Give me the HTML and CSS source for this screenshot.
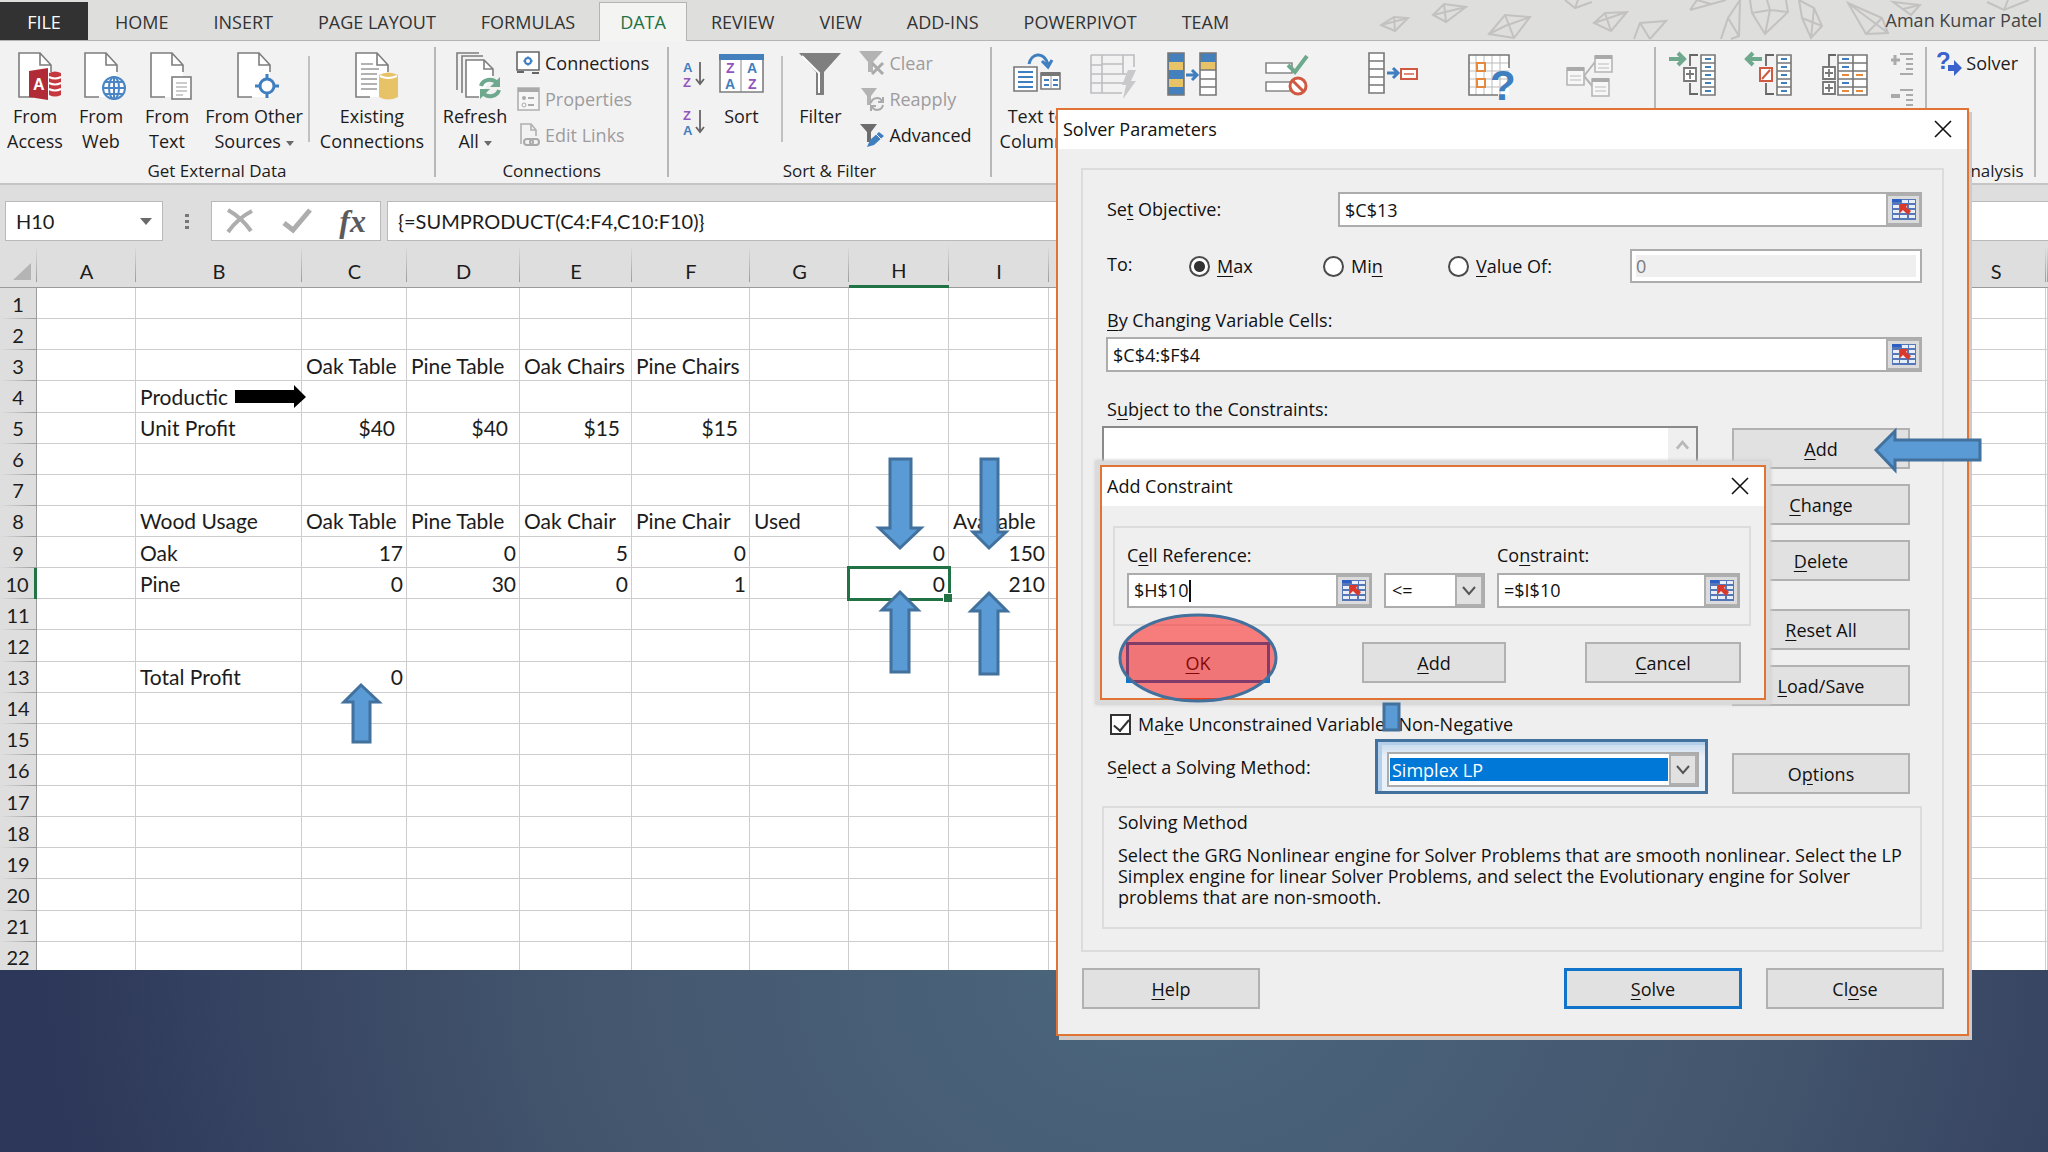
FILE: index.html
```html
<!DOCTYPE html>
<html lang="en">
<head>
    <meta charset="UTF-8">
    <meta name="viewport" content="width=device-width, initial-scale=1.0">
    <title>Solver Parameters</title>
    <link rel="stylesheet" href="styles.css">
</head>
<body>

    <!-- Shared icon parts -->
    <svg class="defs" aria-hidden="true">
        <symbol id="doc" viewBox="0 0 48 48" overflow="visible">
            <path d="M8 1H29L40 13V45H8Z" fill="#fff"/>
            <path d="M40 20V13L29 1H8V45H22M29 1V13H40" fill="none" stroke="#7d7d7d" stroke-width="1.6"/>
        </symbol>
        <symbol id="refresh" viewBox="0 0 24 24">
            <path d="M3 10A9 8 0 0 1 19 7M21 14A9 8 0 0 1 5 17" fill="none" stroke="#6fa98d" stroke-width="4"/>
            <path d="M22 1V11H12ZM2 23V13H12Z" fill="#6fa98d"/>
        </symbol>
        <symbol id="range" viewBox="0 0 24 21">
            <rect width="24" height="21" fill="#5577b8"/>
            <path d="M0 0H9V3H0Z" fill="#2c5fc4"/>
            <path d="M10 1h6v3h-6zM17 1h6v3h-6zM1 6h6v3H1zM8 6h7v3H8zM17 6h6v3h-6zM1 11h6v3H1zM8 11h7v3H8zM17 11h6v3h-6zM1 16h6v3H1zM8 16h7v3H8zM17 16h6v3h-6z" fill="#e8eef8"/>
            <path d="M8 5L16 5L14 8L19 12L16 16L11 11L8 14Z" fill="#d8392b"/>
        </symbol>
        <symbol id="funnel" viewBox="0 0 42 42">
            <path d="M0 0H42L25 19V42H17V19Z" fill="#7f7f7f"/>
            <path d="M3 3L20 20V40" fill="none" stroke="#fff" stroke-width="2"/>
        </symbol>
        <symbol id="chevron" viewBox="0 0 14 10">
            <path d="M1 1L7 8L13 1" fill="none" stroke="#555" stroke-width="2"/>
        </symbol>
        <symbol id="cross" viewBox="0 0 18 18">
            <path d="M1 1L17 17M17 1L1 17" stroke="#111" stroke-width="1.6"/>
        </symbol>
    </svg>

    <main class="excel">

        <!-- Ribbon tabs -->
        <nav class="tabs">
            <button class="tab file">FILE</button>
            <button class="tab">HOME</button>
            <button class="tab">INSERT</button>
            <button class="tab">PAGE LAYOUT</button>
            <button class="tab">FORMULAS</button>
            <button class="tab active">DATA</button>
            <button class="tab">REVIEW</button>
            <button class="tab">VIEW</button>
            <button class="tab">ADD-INS</button>
            <button class="tab">POWERPIVOT</button>
            <button class="tab">TEAM</button>
            <svg class="pattern" width="672" height="40" viewBox="0 0 672 40" aria-hidden="true">
                <g fill="none" stroke="#c3c2c1" stroke-width="2">
                    <path d="M5 25L18 17L32 18L19 31ZM18 17L19 31M5 25L32 18"/>
                    <path d="M57 15L68 4L90 7L70 22ZM68 4L70 22M57 15L90 7"/>
                    <path d="M113 34L129 15L154 17L138 38ZM129 15L138 38M113 34L129 26L154 17"/>
                    <path d="M189 0L199 8L216 2M199 8L202 0"/>
                    <path d="M218 23L229 13L251 12L235 31ZM229 13L235 31M218 23L251 12"/>
                    <path d="M258 39L264 23L290 21L274 39M264 23L274 39"/>
                    <path d="M314 10L321 0M314 10L350 0M321 0L335 4"/>
                    <path d="M345 39L352 18L364 0L363 36L355 39M352 18L363 36M352 18L364 0"/>
                    <path d="M374 0L376 13L389 34L412 12L410 0M376 13L394 10L412 12M389 34L394 10L391 0"/>
                    <path d="M423 0L426 18L435 38L446 26L438 8ZM438 8L435 38M426 18L446 26"/>
                    <path d="M472 3L506 18L512 33L490 34ZM506 18L490 34M472 3L512 33"/>
                    <path d="M517 2L544 5L535 15ZM527 9L544 5"/>
                    <path d="M611 2L628 10L653 0M628 10L632 0"/>
                </g>
            </svg>
            <span class="user">Aman Kumar Patel</span>
        </nav>

        <!-- Ribbon -->
        <section class="ribbon">
            <div class="group">
                <div class="tools external">
                    <button class="big">
                        <svg width="48" height="48" viewBox="0 0 48 48"><use href="#doc"/>
                            <path d="M18 19L37 16V48L18 45Z" fill="#b02b35"/>
                            <path d="M38 21Q44 18 50 21V43Q44 46 38 43Z" fill="#c5383f"/>
                            <path d="M38 25Q44 28 50 25M38 31Q44 34 50 31M38 37Q44 40 50 37" fill="none" stroke="#fff" stroke-width="2"/>
                            <text x="22" y="38" class="glyph white" font-size="16">A</text>
                        </svg>
                        <span>From<br>Access</span>
                    </button>
                    <button class="big">
                        <svg width="48" height="48" viewBox="0 0 48 48"><use href="#doc"/>
                            <g fill="#fff" stroke="#4a86c5" stroke-width="2"><circle cx="37" cy="36" r="11"/><ellipse cx="37" cy="36" rx="5" ry="11"/><path d="M26 36H48M28 30H46M28 42H46M37 25V47" fill="none"/></g>
                        </svg>
                        <span>From<br>Web</span>
                    </button>
                    <button class="big">
                        <svg width="48" height="48" viewBox="0 0 48 48"><use href="#doc"/>
                            <rect x="29" y="25" width="19" height="22" fill="#fff" stroke="#7d7d7d" stroke-width="1.6"/>
                            <path d="M33 31H44M33 35H44M33 39H44M33 43H40" stroke="#999"/>
                        </svg>
                        <span>From<br>Text</span>
                    </button>
                    <button class="big">
                        <svg width="48" height="48" viewBox="0 0 48 48"><use href="#doc"/>
                            <circle cx="37" cy="34" r="7" fill="#fff" stroke="#3f7fc0" stroke-width="3"/>
                            <path d="M37 22V27M37 41V46M25 34H30M44 34H49" stroke="#3f7fc0" stroke-width="3"/>
                        </svg>
                        <span>From Other<br>Sources <i class="caret-down"></i></span>
                    </button>
                    <hr class="split">
                    <button class="big">
                        <svg width="48" height="48" viewBox="0 0 48 48"><use href="#doc"/>
                            <path d="M13 12H25M13 17H31M13 22H29M13 27H29M13 32H29M13 37H29" stroke="#999" stroke-width="1.5"/>
                            <path d="M31 23Q40 18 50 23V45Q40 50 31 45Z" fill="#e8c267"/>
                            <path d="M32 24Q40 28 49 24" fill="none" stroke="#fff" stroke-width="2"/>
                        </svg>
                        <span>Existing<br>Connections</span>
                    </button>
                </div>
                <h2>Get External Data</h2>
            </div>

            <div class="group">
                <div class="tools">
                    <button class="big refresh">
                        <svg width="48" height="48" viewBox="0 0 48 48">
                            <path d="M6 38V1H28M11 41V4H32" fill="none" stroke="#7d7d7d" stroke-width="1.6"/>
                            <path d="M28 45H15V8H33L42 17V24" fill="#fff" stroke="#7d7d7d" stroke-width="1.6"/>
                            <path d="M33 8V17H42" fill="none" stroke="#7d7d7d" stroke-width="1.6"/>
                            <use href="#refresh" x="27" y="24" width="24" height="24"/>
                        </svg>
                        <span>Refresh<br>All <i class="caret-down"></i></span>
                    </button>
                    <div class="stack">
                        <button class="small">
                            <svg width="25" height="24" viewBox="0 0 25 24"><path d="M1 1H23V19H1Z" fill="#fff" stroke="#666" stroke-width="1.6"/><path d="M1 21H8M16 22H23" stroke="#666" stroke-width="2"/><circle cx="12" cy="10" r="3" fill="none" stroke="#3f7fc0" stroke-width="2"/><path d="M12 5V15M7 10H17" stroke="#3f7fc0" stroke-dasharray="2 6"/></svg>
                            Connections
                        </button>
                        <button class="small" disabled>
                            <svg width="25" height="24" viewBox="0 0 25 24"><path d="M2 1H23V23H2Z" fill="#f6f6f6" stroke="#b0b0b0" stroke-width="1.6"/><path d="M2 3H23" stroke="#aaa" stroke-width="4"/><circle cx="8" cy="11" r="2" fill="#aaa"/><circle cx="8" cy="18" r="2" fill="none" stroke="#aaa"/><path d="M12 11H18M12 18H18" stroke="#aaa" stroke-width="2"/></svg>
                            Properties
                        </button>
                        <button class="small" disabled>
                            <svg width="25" height="24" viewBox="0 0 25 24"><path d="M5 21V1H15L20 7V13M15 1V7H20" fill="none" stroke="#b0b0b0" stroke-width="1.6"/><rect x="8" y="16" width="9" height="6" rx="3" fill="none" stroke="#aaa" stroke-width="2"/><rect x="14" y="16" width="9" height="6" rx="3" fill="none" stroke="#aaa" stroke-width="2"/></svg>
                            Edit Links
                        </button>
                    </div>
                </div>
                <h2>Connections</h2>
            </div>

            <div class="group">
                <div class="tools sortfilter">
                    <div class="az">
                        <button class="plain" aria-label="Sort A to Z">
                            <svg width="22" height="26" viewBox="0 0 22 26"><text x="0" y="11" class="glyph blue" font-size="13">A</text><text x="0" y="26" class="glyph purple" font-size="13">Z</text><path d="M17 1V22M13 18L17 23L21 18" fill="none" stroke="#666" stroke-width="1.8"/></svg>
                        </button>
                        <button class="plain" aria-label="Sort Z to A">
                            <svg width="22" height="26" viewBox="0 0 22 26"><text x="0" y="11" class="glyph purple" font-size="13">Z</text><text x="0" y="26" class="glyph blue" font-size="13">A</text><path d="M17 1V22M13 18L17 23L21 18" fill="none" stroke="#666" stroke-width="1.8"/></svg>
                        </button>
                    </div>
                    <button class="big sort">
                        <svg width="48" height="48" viewBox="0 0 48 48">
                            <path d="M3 3H46V40H3Z" fill="#fff" stroke="#7d7d7d" stroke-width="1.6"/>
                            <path d="M2 2H47V8H2Z" fill="#4480bc"/><path d="M24 8V40" stroke="#888"/>
                            <text x="9" y="21" class="glyph purple" font-size="14">Z</text><text x="30" y="21" class="glyph blue" font-size="14">A</text>
                            <text x="8" y="37" class="glyph blue" font-size="14">A</text><text x="31" y="37" class="glyph purple" font-size="14">Z</text>
                        </svg>
                        <span>Sort</span>
                    </button>
                    <hr class="split">
                    <button class="big filter">
                        <svg width="48" height="48" viewBox="0 0 48 48"><use href="#funnel" x="3" y="1" width="42" height="42"/></svg>
                        <span>Filter</span>
                    </button>
                    <div class="stack">
                        <button class="small" disabled>
                            <svg width="26" height="24" viewBox="0 0 26 24"><path d="M0 0H24L14 11V21H9V11Z" fill="#b3b3b3"/><path d="M13 12L24 23M24 12L13 23" stroke="#aaa" stroke-width="3"/></svg>
                            Clear
                        </button>
                        <button class="small" disabled>
                            <svg width="26" height="24" viewBox="0 0 26 24"><path d="M2 1H18L12 9V18H8V9Z" fill="#b3b3b3"/><path d="M12 16A6 6 0 0 1 23 14M24 18A6 6 0 0 1 13 20M24 10V15H19M12 24V19H17" fill="none" stroke="#aaa" stroke-width="2"/></svg>
                            Reapply
                        </button>
                        <button class="small">
                            <svg width="26" height="24" viewBox="0 0 26 24"><path d="M1 1H18L12 9V19H8V9Z" fill="#6d6d6d"/><path d="M8 24L11 17L20 9L25 13L15 22Z" fill="#3f7fc0"/><path d="M17 11L22 16" stroke="#fff"/></svg>
                            Advanced
                        </button>
                    </div>
                </div>
                <h2>Sort &amp; Filter</h2>
            </div>

            <div class="group wide">
                <div class="tools datatools">
                    <button class="big">
                        <svg width="48" height="48" viewBox="0 0 48 48">
                            <path d="M1 15H24V39H1Z" fill="#fff" stroke="#777" stroke-width="1.6"/><path d="M5 20H20M5 25H20M5 30H20M5 35H20" stroke="#3f7fc0" stroke-width="2"/>
                            <path d="M28 21H47V37H28Z" fill="#fff" stroke="#777" stroke-width="1.6"/><path d="M28 22H47" stroke="#777" stroke-width="4"/><path d="M31 28H36M40 28H45M31 33H36M40 33H45" stroke="#3f7fc0" stroke-width="2"/><path d="M38 24V37" stroke="#999"/>
                            <path d="M16 12C18 2 30 -2 35 12M29 9L35 15L39 8" fill="none" stroke="#3f7fc0" stroke-width="3"/>
                        </svg>
                        <span>Text to<br>Columns</span>
                    </button>
                    <button class="big" aria-label="Flash Fill">
                        <svg width="48" height="48" viewBox="0 0 48 48">
                            <path d="M1 3H44V15M1 3V41H32M1 13H12M1 22H40M1 31H34M12 3V41M33 3V13M12 12H33V22H12Z" fill="none" stroke="#bdbdc0" stroke-width="1.6"/>
                            <path d="M38 18H46L41 29H46L33 47L36 33H32Z" fill="#c9c9cc"/>
                        </svg>
                    </button>
                    <button class="big" aria-label="Remove Duplicates">
                        <svg width="50" height="48" viewBox="0 0 50 48">
                            <path d="M1 1H17V43H1Z" fill="#4480bc"/><path d="M2 10H16V18H2ZM2 27H16V35H2Z" fill="#e8c267"/>
                            <path d="M1 1H17V43H1Z" fill="none" stroke="#777" stroke-width="1.6"/>
                            <path d="M33 1H49V43H33Z" fill="#fff"/><path d="M33 1H49V10H33Z" fill="#4480bc"/><path d="M33 10H49V18H33Z" fill="#e8c267"/>
                            <path d="M33 1H49V43H33ZM33 18H49M33 27H49M33 35H49" fill="none" stroke="#777" stroke-width="1.6"/>
                            <path d="M19 23H28M25 18L30 23L25 28" fill="none" stroke="#3f7fc0" stroke-width="3"/>
                        </svg>
                    </button>
                    <button class="big" aria-label="Data Validation">
                        <svg width="48" height="48" viewBox="0 0 48 48">
                            <path d="M2 11H28V21H2ZM2 30H28V39H2Z" fill="#fff" stroke="#888" stroke-width="1.6"/>
                            <path d="M24 13L31 20L43 4" fill="none" stroke="#6fa98d" stroke-width="4"/>
                            <circle cx="34" cy="34" r="8" fill="#fff" stroke="#cf5a41" stroke-width="3"/><path d="M28 28L40 40" stroke="#cf5a41" stroke-width="3"/>
                        </svg>
                    </button>
                    <button class="big" aria-label="Consolidate">
                        <svg width="50" height="48" viewBox="0 0 50 48">
                            <path d="M1 1H16V41H1ZM1 9H16M1 17H16M1 25H16M1 33H16" fill="#fff" stroke="#777" stroke-width="1.6"/>
                            <path d="M19 21H28M25 16L30 21L25 26" fill="none" stroke="#3f7fc0" stroke-width="3"/>
                            <path d="M33 17H49V27H33Z" fill="#fff" stroke="#cf5a41" stroke-width="2"/><path d="M36 22H46" stroke="#e08a78" stroke-width="2"/>
                        </svg>
                    </button>
                    <button class="big" aria-label="What-If Analysis">
                        <svg width="48" height="48" viewBox="0 0 48 48">
                            <path d="M1 3H41V43H1Z" fill="#fff"/><path d="M8 3V43M16 3V43M24 3V43M32 3V43M1 11H41M1 19H41M1 27H41M1 35H41" stroke="#bbb"/>
                            <path d="M41 16V3H1V43H30" fill="none" stroke="#777" stroke-width="1.6"/>
                            <path d="M9 11H17V19H9ZM9 27H17V35H9Z" fill="#fff" stroke="#e58a3c" stroke-width="2"/>
                            <text x="22" y="48" class="glyph blue" font-size="42">?</text>
                        </svg>
                    </button>
                    <button class="big" aria-label="Relationships">
                        <svg width="48" height="48" viewBox="0 0 48 48">
                            <path d="M18 24L29 10M18 24L27 35" stroke="#b5b5b5" stroke-width="2"/>
                            <g fill="#f7f7f7" stroke="#b5b5b5" stroke-width="1.6"><path d="M1 16H18V33H1Z"/><path d="M29 4H46V20H29Z"/><path d="M26 27H43V44H26Z"/></g>
                            <path d="M1 17H18M29 5H46M26 28H43" stroke="#aaa" stroke-width="4"/>
                            <path d="M4 24H15M4 28H15M32 12H43M32 16H43M29 35H40M29 39H40" stroke="#bbb"/>
                        </svg>
                    </button>
                </div>
            </div>

            <div class="group">
                <div class="tools outline">
                    <button class="big" aria-label="Group">
                        <svg width="48" height="48" viewBox="0 0 48 48">
                            <path d="M0 7H14M9 1L15 7L9 13" fill="none" stroke="#6fa98d" stroke-width="4"/>
                            <path d="M29 3H21V14M21 31V42H29" fill="none" stroke="#666" stroke-width="1.8"/><path d="M15 16H27V29H15Z" fill="#fff" stroke="#777" stroke-width="1.8"/><path d="M17 22H25M21 18V27" stroke="#777" stroke-width="1.8"/>
                            <path d="M32 3H46V43H32ZM32 11H46M32 19H46M32 27H46M32 35H46" fill="#fff" stroke="#777" stroke-width="1.6"/><path d="M36 7H42M36 15H42M36 23H42M36 31H42M36 39H42" stroke="#3f7fc0" stroke-width="2"/>
                        </svg>
                    </button>
                    <button class="big" aria-label="Ungroup">
                        <svg width="48" height="48" viewBox="0 0 48 48">
                            <path d="M17 7H3M8 1L2 7L8 13" fill="none" stroke="#6fa98d" stroke-width="4"/>
                            <path d="M29 3H21V14M21 31V42H29" fill="none" stroke="#666" stroke-width="1.8"/><path d="M15 16H27V29H15Z" fill="#fff" stroke="#cf5a41" stroke-width="2"/><path d="M17 27L25 18" stroke="#cf5a41" stroke-width="2"/>
                            <path d="M32 3H46V43H32ZM32 11H46M32 19H46M32 27H46M32 35H46" fill="#fff" stroke="#777" stroke-width="1.6"/><path d="M36 7H42M36 15H42M36 23H42M36 31H42M36 39H42" stroke="#3f7fc0" stroke-width="2"/>
                        </svg>
                    </button>
                    <button class="big" aria-label="Subtotal">
                        <svg width="48" height="48" viewBox="0 0 48 48">
                            <path d="M15 3H8V14" fill="none" stroke="#666" stroke-width="1.8"/><path d="M2 15H14V27H2ZM2 30H14V42H2Z" fill="#fff" stroke="#777" stroke-width="1.8"/><path d="M4 21H12M8 17V25M4 36H12M8 32V40" stroke="#777" stroke-width="1.8"/>
                            <path d="M17 3H46V43H17ZM17 11H46M17 19H46M17 27H46M17 35H46M32 3V43" fill="#fff" stroke="#777" stroke-width="1.6"/><path d="M21 7H28M21 15H28M21 31H28" stroke="#3f7fc0" stroke-width="2"/><path d="M21 23H28M35 23H42M21 39H28M35 39H42" stroke="#e58a3c" stroke-width="2"/>
                        </svg>
                    </button>
                    <div class="detail">
                        <button class="plain" aria-label="Show Detail">
                            <svg width="22" height="24" viewBox="0 0 22 24"><path d="M0 8H9M4 3V13" stroke="#aaa" stroke-width="3"/><path d="M9 2H22M15 7H22M15 12H22M15 17H22M9 22H22" stroke="#aaa" stroke-width="2"/></svg>
                        </button>
                        <button class="plain" aria-label="Hide Detail">
                            <svg width="22" height="24" viewBox="0 0 22 24"><path d="M0 8H9" stroke="#aaa" stroke-width="4"/><path d="M9 2H22M15 7H22M15 12H22M15 17H22M9 22H22" stroke="#aaa" stroke-width="2"/></svg>
                        </button>
                    </div>
                </div>
            </div>

            <div class="group analysis">
                <div class="tools">
                    <div class="stack">
                        <button class="small">
                            <svg width="26" height="28" viewBox="0 0 26 28"><text x="0" y="20" class="glyph royal" font-size="24">?</text><path d="M12 16H18V11L26 19L18 27V22H12Z" fill="#3b62cc"/></svg>
                            Solver
                        </button>
                    </div>
                </div>
                <h2>Analysis</h2>
            </div>
        </section>

        <!-- Formula bar -->
        <section class="formula-bar">
            <div class="name-box">
                <input type="text" value="H10" aria-label="Name Box">
                <i class="caret-down"></i>
            </div>
            <svg class="dots" width="4" height="16" viewBox="0 0 4 16"><path d="M0 0h4v3H0zM0 6h4v3H0zM0 12h4v3H0z" fill="#777"/></svg>
            <div class="fx-box">
                <button class="plain" aria-label="Cancel entry"><svg width="28" height="26" viewBox="0 0 28 26"><path d="M2 2Q16 10 25 23M26 3Q12 10 2 24" fill="none" stroke="#adadad" stroke-width="4"/></svg></button>
                <button class="plain" aria-label="Enter"><svg width="30" height="26" viewBox="0 0 30 26"><path d="M2 15L11 22L28 2" fill="none" stroke="#adadad" stroke-width="5"/></svg></button>
                <button class="plain fx" aria-label="Insert Function">fx</button>
            </div>
            <input class="formula" type="text" value="{=SUMPRODUCT(C4:F4,C10:F10)}" aria-label="Formula">
        </section>

        <!-- Worksheet, filled in by script.js -->
        <section class="sheet">
            <table id="sheet"></table>
        </section>
    </main>

    <!-- Solver Parameters -->
    <section class="window solver">
        <header>
            <h1>Solver Parameters</h1>
            <button class="plain" aria-label="Close window"><svg width="18" height="18"><use href="#cross"/></svg></button>
        </header>

        <div class="frame params">
            <div class="objective">
                <label for="objective">Se<u>t</u> Objective:</label>
                <div class="field">
                    <input id="objective" type="text" value="$C$13">
                    <button aria-label="Select objective cell"><svg width="24" height="21"><use href="#range"/></svg></button>
                </div>
            </div>
            <div class="goal">
                <span class="to">To:</span>
                <label><input type="radio" name="goal" checked><span><u>M</u>ax</span></label>
                <label><input type="radio" name="goal"><span>Mi<u>n</u></span></label>
                <label><input type="radio" name="goal"><span><u>V</u>alue Of:</span></label>
                <div class="value-of"><input type="text" value="0" aria-label="Value" disabled></div>
            </div>

            <label class="above" for="cells"><u>B</u>y Changing Variable Cells:</label>
            <div class="field cells">
                <input id="cells" type="text" value="$C$4:$F$4">
                <button aria-label="Select variable cells"><svg width="24" height="21"><use href="#range"/></svg></button>
            </div>

            <span class="above">S<u>u</u>bject to the Constraints:</span>
            <div class="constraints">
                <div class="left">
                    <div class="list"><span class="scroll"><svg width="13" height="10" viewBox="0 0 14 10"><path d="M1 9L7 2L13 9" fill="none" stroke="#b8b8b8" stroke-width="3"/></svg></span></div>
                    <label class="check"><input type="checkbox" checked><span>Ma<u>k</u>e Unconstrained Variables Non-Negative</span></label>
                    <div class="method">
                        <label for="method">S<u>e</u>lect a Solving Method:</label>
                        <div class="highlight">
                            <div class="combo">
                                <select id="method"><option>Simplex LP</option></select>
                                <span class="arrow"><svg width="14" height="10"><use href="#chevron"/></svg></span>
                            </div>
                        </div>
                    </div>
                </div>
                <div class="side">
                    <button class="btn"><u>A</u>dd</button>
                    <button class="btn"><u>C</u>hange</button>
                    <button class="btn"><u>D</u>elete</button>
                    <button class="btn reset"><u>R</u>eset All</button>
                    <button class="btn"><u>L</u>oad/Save</button>
                    <button class="btn options">O<u>p</u>tions</button>
                </div>
            </div>

            <div class="frame about">
                <h2>Solving Method</h2>
                <p>Select the GRG Nonlinear engine for Solver Problems that are smooth nonlinear. Select the LP Simplex engine for linear Solver Problems, and select the Evolutionary engine for Solver problems that are non-smooth.</p>
            </div>
        </div>

        <footer>
            <button class="btn"><u>H</u>elp</button>
            <button class="btn default"><u>S</u>olve</button>
            <button class="btn">Cl<u>o</u>se</button>
        </footer>
    </section>

    <!-- Add Constraint -->
    <section class="window add">
        <header>
            <h1>Add Constraint</h1>
            <button class="plain" aria-label="Close window"><svg width="18" height="18"><use href="#cross"/></svg></button>
        </header>
        <div class="frame rule">
            <label for="cellref">C<u>e</u>ll Reference:</label>
            <label class="third" for="limit">Co<u>n</u>straint:</label>
            <div class="field">
                <input id="cellref" type="text" value="$H$10">
                <i class="cursor"></i>
                <button aria-label="Select cell reference"><svg width="24" height="21"><use href="#range"/></svg></button>
            </div>
            <div class="combo">
                <select aria-label="Operator"><option>&lt;=</option></select>
                <span class="arrow"><svg width="14" height="10"><use href="#chevron"/></svg></span>
            </div>
            <div class="field">
                <input id="limit" type="text" value="=$I$10">
                <button aria-label="Select constraint"><svg width="24" height="21"><use href="#range"/></svg></button>
            </div>
        </div>
        <footer>
            <button class="btn default"><u>O</u>K</button>
            <button class="btn"><u>A</u>dd</button>
            <button class="btn"><u>C</u>ancel</button>
        </footer>
    </section>

    <!-- Arrows and the ring drawn over everything -->
    <svg class="marks" aria-hidden="true">
        <path d="M235 390H294V385L306 397L294 408V403H235Z" fill="#000"/>
        <g fill="#5b9bd5" stroke="#41719c" stroke-width="3">
            <path d="M890 459H911V528H921L900 548L879 528H890Z"/>
            <path d="M981 459H998V532H1006L989 548L973 532H981Z"/>
            <path d="M900 592L918 610H909V672H891V610H882Z"/>
            <path d="M989 593L1007 611H998V674H980V611H971Z"/>
            <path d="M361 685L379 702H370V742H353V702H344Z"/>
            <path d="M1876 450L1895 431V440H1980V460H1895V470Z"/>
            <path d="M1384 704H1399V730H1384Z"/>
        </g>
        <ellipse cx="1198" cy="658" rx="78" ry="43" fill="#ff0000" fill-opacity="0.48" stroke="#41719c" stroke-width="3"/>
    </svg>

    <script src="script.js"></script>
</body>
</html>
```

FILE: styles.css
```css
* {
    box-sizing: border-box;
}

body {
    margin: 0;
    min-height: 100vh;
    overflow: hidden;
    position: relative;
    font-family: "Open Sans", "Noto Sans", sans-serif;
    font-size: 18px;
    color: #1c1c1c;
    background: radial-gradient(ellipse 58% 80% at 57% 84%, #4b677e 0%, #44566e 50%, #2d3759 95%);
}

button,
input,
select {
    font: inherit;
    color: inherit;
    margin: 0;
    border: 0;
    padding: 0;
    background: none;
    border-radius: 0;
    outline: 0;
}

h1,
h2,
p {
    margin: 0;
    font-size: inherit;
    font-weight: normal;
}

svg {
    display: block;
    flex: none;
    overflow: visible;
}

.defs {
    position: absolute;
    width: 0;
    height: 0;
}

.glyph {
    font-family: "Liberation Sans", sans-serif;
    font-weight: 700;
}

.white { fill: #fff; }
.blue { fill: #3f7fc0; }
.purple { fill: #9256bd; }
.royal { fill: #3b62cc; }

.caret-down {
    display: inline-block;
    vertical-align: middle;
    border: 4px solid transparent;
    border-top: 5px solid #6a6a6a;
    border-bottom: 0;
}

/* Tabs */
.tabs {
    display: flex;
    gap: 3px;
    height: 41px;
    padding-top: 2px;
    background: #dededd;
    border-bottom: 1px solid #b5b4b5;
    position: relative;
}

.tab {
    padding: 0 20px;
    border: 1px solid transparent;
    border-bottom: 0;
    white-space: nowrap;
    color: #333;
}

.tab.file {
    width: 88px;
    margin-right: 3px;
    background: #333233;
    color: #fff;
}

.tab.active {
    margin-bottom: -1px;
    border-color: #b5b4b5;
    background: #f4f4f3;
    color: #217346;
}

.pattern {
    position: absolute;
    top: 0;
    right: 0;
    overflow: hidden;
}

.user {
    margin-left: auto;
    padding-right: 6px;
    line-height: 36px;
    position: relative;
    color: #444;
}

/* Ribbon */
.ribbon {
    display: flex;
    height: 144px;
    padding-top: 6px;
    background: #f3f2f3;
    border-bottom: 2px solid #c6c5c6;
}

.group {
    display: flex;
    flex-direction: column;
    height: 130px;
    border-right: 2px solid #b9b8b9;
}

.group.wide {
    flex: 1;
}

.group h2 {
    text-align: center;
    font-size: 17px;
    line-height: 24px;
    margin-top: auto;
    margin-bottom: -6px;
}

.tools {
    display: flex;
    padding-top: 5px;
}

.external {
    display: grid;
    grid-template-columns: 66px 66px 66px 108px 2px 124px;
    padding-left: 2px;
}

.big {
    display: flex;
    flex-direction: column;
    align-items: center;
    gap: 4px;
    line-height: 25px;
    white-space: nowrap;
}

.refresh { width: 78px; }
.sort { width: 68px; }
.filter { width: 74px; }

.split {
    width: 2px;
    height: 86px;
    margin: 4px 0;
    border: 0;
    background: #c2c1c2;
}

.sortfilter .split {
    margin-left: 6px;
}

.stack {
    display: flex;
    flex-direction: column;
    margin-top: -7px;
    padding: 0 18px 0 2px;
}

.small {
    display: flex;
    align-items: center;
    gap: 4px;
    height: 36px;
    white-space: nowrap;
}

.small:disabled {
    color: #9d9c9d;
}

.az {
    display: flex;
    flex-direction: column;
    gap: 22px;
    padding: 9px 2px 0 14px;
}

.datatools {
    display: grid;
    grid-template-columns: 76px 78px 78px 114px 96px 102px 94px;
    padding-left: 7px;
}

.outline {
    gap: 28px;
    padding-left: 13px;
}

.detail {
    display: flex;
    flex-direction: column;
    gap: 12px;
    margin-left: -6px;
    padding-right: 12px;
}

.analysis {
    margin-right: 12px;
}

.analysis .stack {
    padding: 0 16px 0 9px;
}

.analysis h2 {
    padding-left: 22px;
}

/* Formula bar */
.formula-bar {
    display: flex;
    align-items: stretch;
    height: 56px;
    padding: 16px 0 0 5px;
    background: #dfdedf;
}

.name-box,
.fx-box,
.formula {
    background: #fff;
    border: 1px solid #bab9ba;
}

.name-box {
    display: flex;
    align-items: center;
    width: 158px;
    padding: 0 10px;
    font-family: Lato, sans-serif;
    font-size: 20px;
}

.name-box input {
    flex: 1;
    min-width: 0;
}

.name-box .caret-down {
    border-width: 7px 6px 0;
}

.dots {
    margin: 13px 22px;
}

.fx-box {
    display: flex;
    align-items: center;
    justify-content: space-between;
    width: 170px;
    padding: 0 14px;
}

.fx {
    font: italic bold 32px/32px "Liberation Serif", serif;
    color: #5b5b5b;
}

.formula {
    flex: 1;
    margin-left: 6px;
    padding: 0 10px;
    border-right: 0;
    font-family: Lato, sans-serif;
    font-size: 20px;
}

/* Worksheet */
.sheet {
    height: 729px;
    overflow: hidden;
    background: #fff;
}

.sheet table {
    width: 100%;
    height: 732px;
    table-layout: fixed;
    border-spacing: 0;
    font-family: Lato, sans-serif;
    font-size: 21px;
    line-height: 24px;
}

.sheet thead tr {
    height: 47px;
}

.sheet td {
    padding: 1px 4px 0;
    white-space: nowrap;
    border-right: 1px solid #cfcccf;
    border-bottom: 1px solid #cfcccf;
}

.sheet th {
    padding: 1px 0;
    font-weight: normal;
    font-size: 20px;
    background: #dfdedf;
}

.sheet thead th {
    padding-top: 15px;
    border-bottom: 1px solid #9c9b9c;
    background: linear-gradient(#dfdedf, #9c9b9c) right / 1px 36px no-repeat #dfdedf;
}

.sheet thead th.picked {
    border-bottom: 3px solid #217346;
}

.sheet tbody th {
    border-right: 1px solid #9c9b9c;
    background: linear-gradient(to right, #dfdedf, #9c9b9c) bottom / 100% 1px no-repeat #dfdedf;
}

.sheet tbody th.picked {
    border-right: 3px solid #217346;
}

.corner svg {
    margin-left: 13px;
}

.sheet .num {
    text-align: right;
    padding-right: 3px;
}

.sheet .money {
    text-align: right;
    padding-right: 11px;
}

.sheet .cell-active {
    position: relative;
    outline: 3px solid #217346;
    outline-offset: -1px;
}

.cell-active::after {
    content: "";
    position: absolute;
    right: -4px;
    bottom: -4px;
    width: 8px;
    height: 8px;
    background: #217346;
    border: 1px solid #fff;
    border-width: 1px 0 0 1px;
}

/* Windows */
.window {
    position: absolute;
    border: 2px solid #df7434;
    background: #f0eff0;
    color: #111;
}

.window header {
    display: flex;
    align-items: center;
    justify-content: space-between;
    height: 39px;
    padding: 0 15px 2px 5px;
    background: #fff;
}

.frame {
    border: 2px solid #dddcdd;
}

.window footer {
    display: flex;
}

.btn {
    height: 41px;
    border: 2px solid #b2b1b2;
    background: #e2e1e2;
}

.btn.default {
    border: 3px solid #1173c9;
}

u {
    text-underline-offset: 3px;
}

.field,
.combo {
    display: flex;
    height: 35px;
    border: 2px solid #adacad;
    background: #fff;
    position: relative;
}

.field input {
    flex: 1;
    min-width: 0;
    padding: 0 5px;
}

.field button {
    display: flex;
    align-items: center;
    justify-content: center;
    width: 34px;
    border: 2px solid #b0afb0;
    border-right-width: 1px;
    background: #dcdbdc;
}

.combo select {
    flex: 1;
    min-width: 0;
    appearance: none;
    padding: 0 6px;
}

.arrow {
    display: flex;
    align-items: center;
    justify-content: center;
    width: 28px;
    border: 2px solid #b0afb0;
    background: #e2e1e2;
}

/* Solver Parameters */
.solver {
    left: 1056px;
    top: 108px;
    width: 913px;
    padding-bottom: 25px;
    box-shadow: 3px 4px 0 #cfcac8;
}

.params {
    margin: 19px 23px 16px;
    padding: 22px 20px 21px 19px;
}

.objective {
    display: grid;
    grid-template-columns: 1fr 584px;
    align-items: center;
    padding-left: 5px;
}

.objective label {
    padding-bottom: 2px;
}

.goal {
    display: grid;
    grid-template-columns: 87px 134px 125px 1fr 292px;
    align-items: center;
    margin-top: 22px;
}

.goal label,
.check {
    display: flex;
    align-items: center;
    gap: 7px;
}

.to,
.above {
    padding-left: 5px;
}

.goal .to {
    padding-bottom: 4px;
}

input[type="radio"] {
    appearance: none;
    width: 21px;
    height: 21px;
    border: 2px solid #4a4a4a;
    border-radius: 50%;
    background: #fff;
}

input[type="radio"]:checked {
    background: radial-gradient(circle, #333 0 5px, #fff 6px);
}

.value-of {
    height: 34px;
    padding: 4px;
    border: 2px solid #adacad;
    background: #fff;
}

.value-of input {
    display: block;
    width: 100%;
    height: 22px;
    background: #f0eff0;
    color: #7b7b7b;
}

.above {
    display: block;
    line-height: 25px;
    margin: 25px 0 4px;
}

.field.cells {
    margin-left: 4px;
}

.constraints {
    display: flex;
    gap: 24px;
}

.left {
    flex: 1;
    display: flex;
    flex-direction: column;
}

.list {
    flex: 1;
    margin-right: 10px;
    border: 2px solid #8b8a8b;
    background: #fff;
}

.scroll {
    display: flex;
    justify-content: center;
    width: 28px;
    height: 100%;
    margin-left: auto;
    padding-top: 12px;
    background: #f0eff0;
}

.check {
    padding: 10px 0 0 8px;
    line-height: 25px;
}

input[type="checkbox"] {
    appearance: none;
    width: 21px;
    height: 21px;
    border: 2px solid #333;
    background: #fff;
    position: relative;
}

input[type="checkbox"]:checked::after {
    content: "";
    position: absolute;
    left: 5px;
    top: 0;
    width: 7px;
    height: 13px;
    border: solid #333;
    border-width: 0 2px 2px 0;
    transform: rotate(40deg);
}

.method {
    display: flex;
    align-items: center;
    justify-content: space-between;
    padding-left: 5px;
    margin-top: 2px;
}

.highlight {
    width: 333px;
    padding: 10px 6px 4px 9px;
    border: 3px solid #41719c;
    background: linear-gradient(#c3d8ec, #e9f0f7 30%);
    box-shadow: inset 4px 3px 0 #b4cfe9;
}

.highlight select {
    margin: 4px 1px;
    padding: 0 2px;
    background: #0078d7;
    color: #fff;
}

.side {
    display: flex;
    flex-direction: column;
    gap: 15px;
    width: 178px;
    margin-right: 12px;
    padding-top: 2px;
}

.side .reset {
    margin-top: 13px;
}

.side .options {
    margin-top: 32px;
}

.about {
    margin-top: 12px;
    padding: 2px 14px 19px;
    line-height: 25px;
}

.about p {
    margin-top: 10px;
    line-height: 21px;
}

.solver footer {
    gap: 24px;
    padding: 0 23px 0 24px;
}

.solver footer .btn {
    width: 178px;
}

.solver footer .btn:first-child {
    margin-right: auto;
}

/* Add Constraint */
.add {
    left: 1100px;
    top: 465px;
    width: 666px;
    padding-bottom: 15px;
    box-shadow: 0 0 0 4px #dbdadb, 0 0 3px 5px #cfcecf;
}

.rule {
    display: grid;
    grid-template-columns: 245px 101px 243px;
    column-gap: 12px;
    row-gap: 5px;
    margin: 20px 13px 16px 11px;
    padding: 15px 8px 16px 12px;
    line-height: 25px;
}

.rule .third {
    grid-column: 3;
}

.cursor {
    position: absolute;
    left: 60px;
    top: 5px;
    width: 2px;
    height: 22px;
    background: #111;
}

.add footer {
    padding: 0 23px 0 24px;
}

.add .btn {
    width: 144px;
}

.add .btn:nth-child(2) {
    margin-left: 92px;
}

.add .btn:last-child {
    width: 156px;
    margin-left: auto;
}

.marks {
    position: absolute;
    inset: 0;
    width: 100%;
    height: 100%;
    pointer-events: none;
}
```

FILE: script.js
```js
// Column letters with their widths; columns without a width share what is left
const columns = [
    ['A', 99], ['B', 166], ['C', 105], ['D', 113], ['E', 112], ['F', 118],
    ['G', 99], ['H', 100], ['I', 100], ['J'], ['K'], ['L'], ['M'], ['N'],
    ['O'], ['P'], ['Q'], ['R'], ['S'], ['', 2]
];

const cells = {
    C3: 'Oak Table', D3: 'Pine Table', E3: 'Oak Chairs', F3: 'Pine Chairs',
    B4: 'Productic',
    B5: 'Unit Profit', C5: '$40', D5: '$40', E5: '$15', F5: '$15',
    B8: 'Wood Usage', C8: 'Oak Table', D8: 'Pine Table', E8: 'Oak Chair',
    F8: 'Pine Chair', G8: 'Used', I8: 'Available',
    B9: 'Oak', C9: 17, D9: 0, E9: 5, F9: 0, H9: 0, I9: 150,
    B10: 'Pine', C10: 0, D10: 30, E10: 0, F10: 1, H10: 0, I10: 210,
    B13: 'Total Profit', C13: 0
};

const active = { column: 'H', row: 10 };

function cellHtml(letter, row) {
    const value = cells[letter + row];
    const names = [];
    if (typeof value === 'number') names.push('num');
    if (typeof value === 'string' && value[0] === '$') names.push('money');
    if (letter === active.column && row === active.row) names.push('cell-active');
    return `<td class="${names.join(' ')}">${value === undefined ? '' : value}</td>`;
}

function drawSheet() {
    let html = '<colgroup><col width="37">';
    html += columns.map(([, width]) => width ? `<col width="${width}">` : '<col>').join('');
    html += '</colgroup><thead><tr><th class="corner"><svg width="18" height="17" viewBox="0 0 18 17"><path d="M18 0V17H0Z" fill="#b5b4b5"/></svg></th>';
    html += columns.map(([letter]) => `<th class="${letter === active.column ? 'picked' : ''}">${letter}</th>`).join('');
    html += '</tr></thead><tbody>';
    for (let row = 1; row <= 22; row++) {
        html += `<tr><th class="${row === active.row ? 'picked' : ''}">${row}</th>`;
        html += columns.map(([letter]) => cellHtml(letter, row)).join('') + '</tr>';
    }
    document.getElementById('sheet').innerHTML = html + '</tbody>';
}

drawSheet();
```
